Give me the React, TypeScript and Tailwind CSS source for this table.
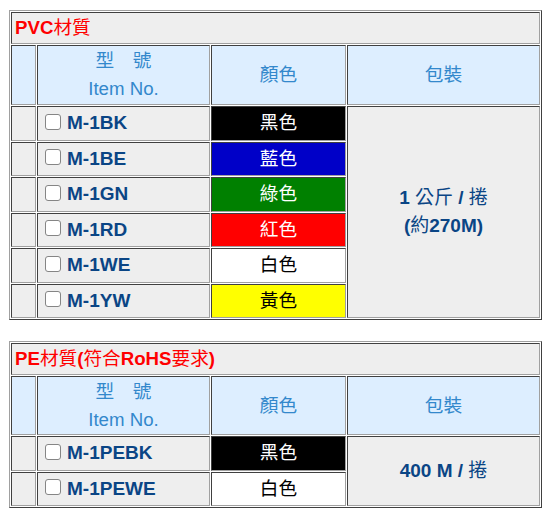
import React from 'react';

type Item = { code: string; color: string; swatch: string };

const pvcItems: Item[] = [
  { code: 'M-1BK', color: '黑色', swatch: 'bg-black text-white' },
  { code: 'M-1BE', color: '藍色', swatch: 'bg-[#0000c8] text-white' },
  { code: 'M-1GN', color: '綠色', swatch: 'bg-[#008000] text-white' },
  { code: 'M-1RD', color: '紅色', swatch: 'bg-[#ff0000] text-white' },
  { code: 'M-1WE', color: '白色', swatch: 'bg-white text-black' },
  { code: 'M-1YW', color: '黃色', swatch: 'bg-[#ffff00] text-black' },
];

const peItems: Item[] = [
  { code: 'M-1PEBK', color: '黑色', swatch: 'bg-black text-white' },
  { code: 'M-1PEWE', color: '白色', swatch: 'bg-white text-black' },
];

// inset look of the old border="1" tables
const cell = 'border border-t-[#404040] border-l-[#404040] border-r-[#a0a0a0] border-b-[#a0a0a0] p-0';

const Cjk: React.FC<{ children: React.ReactNode }> = ({ children }) => (
  <span className="font-normal">{children}</span>
);

const Section: React.FC<{
  title: React.ReactNode;
  items: Item[];
  pack: React.ReactNode;
  headH: string;
}> = ({ title, items, pack, headH }) => (
  <table className="table-fixed w-[533px] border-separate border-spacing-[1px] border border-t-[#a0a0a0] border-l-[#a0a0a0] border-r-[#404040] border-b-[#404040]">
    <colgroup>
      <col className="w-[25px]" />
      <col className="w-[173px]" />
      <col className="w-[135px]" />
      <col className="w-[193px]" />
    </colgroup>
    <tbody>
      <tr>
        <td colSpan={4} className={`${cell} h-[32px] bg-[#eeeeee] pl-[3px] text-left font-bold text-[#ff0000]`}>
          {title}
        </td>
      </tr>
      <tr className="text-[#3388cc] font-normal text-center">
        <td className={`${cell} ${headH} bg-[#ddeeff]`} />
        <td className={`${cell} bg-[#ddeeff]`}>
          <div>型　號</div>
          <div>Item No.</div>
        </td>
        <td className={`${cell} bg-[#ddeeff]`}>顏色</td>
        <td className={`${cell} bg-[#ddeeff]`}>包裝</td>
      </tr>
      {items.map((it, i) => (
        <tr key={it.code}>
          <td className={`${cell} h-[34.5px] bg-[#eeeeee]`} />
          <td className={`${cell} bg-[#eeeeee] pl-[7px]`}>
            <div className="flex items-center gap-[6px]">
              <span className="w-[16px] h-[16px] mb-[3px] shrink-0 rounded-[3px] border border-[#858585] bg-white" />
              <span className="font-bold text-[19px] text-[#0a4585]">{it.code}</span>
            </div>
          </td>
          <td className={`${cell} ${it.swatch} text-center`}>{it.color}</td>
          {i === 0 && (
            <td rowSpan={items.length} className={`${cell} bg-[#eeeeee] text-center font-bold text-[19px] text-[#0a4585]`}>
              {pack}
            </td>
          )}
        </tr>
      ))}
    </tbody>
  </table>
);

export default function App() {
  return (
    <div className="min-h-screen bg-white pt-[10px] pl-[9px] text-[18.67px] font-['Liberation_Sans','Noto_Sans_CJK_TC',sans-serif]">
      <Section
        title={<>PVC<Cjk>材質</Cjk></>}
        items={pvcItems}
        headH="h-[60px]"
        pack={
          <>
            <div>1 <Cjk>公斤</Cjk> / <Cjk>捲</Cjk></div>
            <div>(<Cjk>約</Cjk>270M)</div>
          </>
        }
      />
      <div className="h-[21px]" />
      <Section
        title={<>PE<Cjk>材質</Cjk>(<Cjk>符合</Cjk>RoHS<Cjk>要求</Cjk>)</>}
        items={peItems}
        headH="h-[59px]"
        pack={<div>400 M / <Cjk>捲</Cjk></div>}
      />
    </div>
  );
}
